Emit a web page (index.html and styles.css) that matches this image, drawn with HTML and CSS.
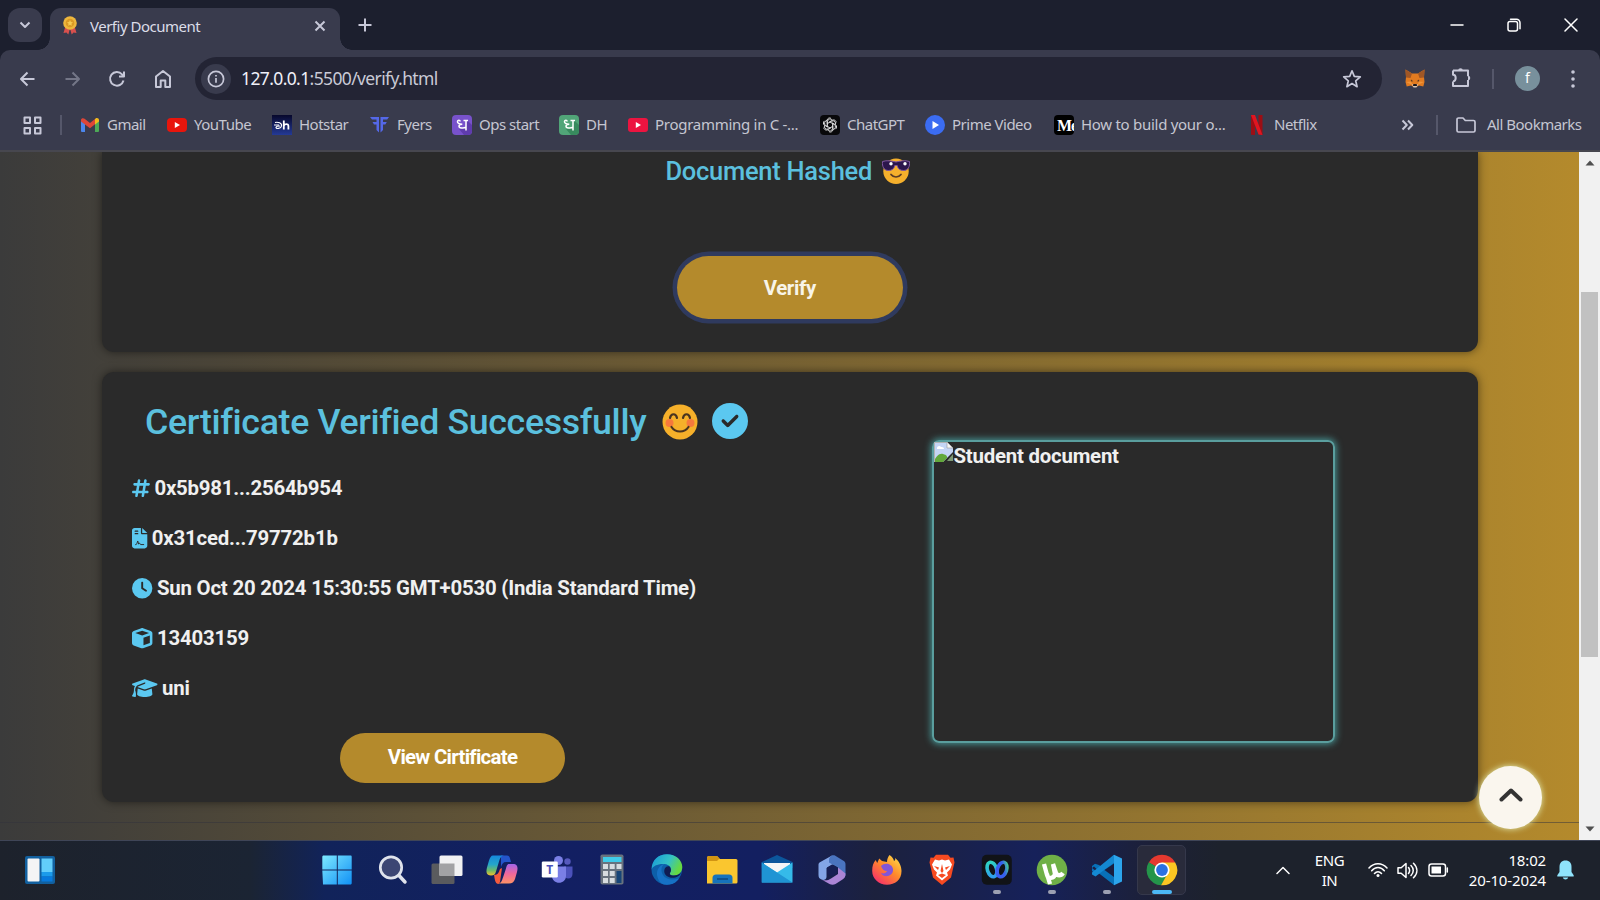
FILE: index.html
```html
<!DOCTYPE html>
<html lang="en">
<head>
<meta charset="utf-8">
<title>Verfiy Document</title>
<link rel="stylesheet" href="styles.css">
</head>
<body>
<div class="screen">
  <header class="tabstrip">
    <div class="tab-search"><svg width="12" height="8" viewBox="0 0 12 8" class="line w2"><path d="M1.500 1.500 6 6l4.500-4.500"/></svg></div>
    <div class="tab">
      <svg class="tab-fav" width="16" height="19" viewBox="0 0 16 19"><path d="M3.500 10 1.500 17l3-.5 1.800 2 1.700-6 1.700 6 1.800-2 3 .5-2-7z" fill="#d8504d"/><circle cx="8" cy="7" r="6.800" fill="#eeb73d"/><circle cx="8" cy="7" r="4.300" fill="#dc9a24"/><path d="m8 4 .9 2 2.100.2-1.600 1.500.5 2.100L8 8.700 6.100 9.800l.5-2.100L5 6.200 7.100 6z" fill="#f6cb52"/></svg>
      <span class="tab-title">Verfiy Document</span>
      <svg class="line w2" width="12" height="12" viewBox="0 0 12 12"><path d="m1.500 1.500 9 9m0-9-9 9"/></svg>
    </div>
    <svg class="new-tab line w2" width="14" height="14" viewBox="0 0 14 14"><path d="M7 .5v13M.5 7h13"/></svg>
    <div class="window-buttons">
      <svg width="14" height="14" viewBox="0 0 14 14" class="white"><path d="M1 7h12"/></svg>
      <svg width="14" height="14" viewBox="0 0 14 14" class="white"><rect x="1" y="3.500" width="9.500" height="9.500" rx="2"/><path d="M3.500 1.200h6a3.500 3.500 0 0 1 3.500 3.500v6"/></svg>
      <svg width="14" height="14" viewBox="0 0 14 14" class="white"><path d="m1 1 12 12M13 1 1 13"/></svg>
    </div>
  </header>

  <div class="chrome">
    <div class="toolbar">
      <div class="nav">
        <svg class="line w2" width="17" height="16" viewBox="0 0 17 16"><path d="M15.500 8H2M8.500 1.500 2 8l6.500 6.500"/></svg>
        <svg class="line w2 dim" width="17" height="16" viewBox="0 0 17 16"><path d="M1.500 8H15M8.500 1.500 15 8l-6.500 6.500"/></svg>
        <svg class="line w2" width="18" height="18" viewBox="0 0 18 18"><path d="M15.500 10.500A6.800 6.800 0 1 1 14 4.300L16 6.500M16 1.500v5h-5"/></svg>
        <svg class="line w2" width="18" height="20" viewBox="0 0 18 20"><path d="M2 7.500 9 2l7 5.500V18h-4.700v-6.500H6.700V18H2z"/></svg>
      </div>
      <div class="omnibox">
        <span class="site-info"><svg class="line w17" width="18" height="18" viewBox="0 0 18 18"><circle cx="9" cy="9" r="7.600"/><path d="M9 8v4.800M9 5v1.600"/></svg></span>
        <span class="url"><b>127.0.0.1</b>:5500/verify.html</span>
        <svg class="star line w17" width="20" height="20" viewBox="0 0 20 20"><path d="m10 1.800 2.300 5.600 6 .5-4.600 3.900 1.400 5.900L10 14.600l-5.100 3.100 1.400-5.900L1.700 7.900l6-.5z"/></svg>
      </div>
      <svg class="fox" width="20" height="19" viewBox="0 0 20 19"><path d="m.5.500 6.500 4h6l6.500-4L19 8l.5 5-1.200 4.500-4.300-1L11.500 18h-3L6 16.500l-4.300 1L.5 13 1 8z" fill="#e27b20"/><path d="m.5.500 6.500 4L5.500 9 1 8.500zM19.500.5 13 4.500 14.500 9l4.500-.5z" fill="#a15725"/><path d="m6 10.500 2.300 1.700-2.500.3zM14 10.500l-2.300 1.700 2.500.3z" fill="#5a3a25"/><path d="m1 13 5-.5L7.500 16zM19 13l-5-.5-1.500 3.500z" fill="#f0953a"/><path d="m7 15.500 1.500-.5h3l1.500.5-1.500 3h-3z" fill="#d9c8b9"/><path d="M8.300 15h3.400l.3 2H8z" fill="#1d1818"/></svg>
      <svg class="puzzle line w2" width="21" height="21" viewBox="0 0 21 21"><path d="M2 3.500h5.500M11.500 3.500H17V9.300M17 13v6H2v-4.500M2 3.500v4.200c3.600 0 3.600 6.800 0 6.800M7.500 3.500h4"/><path d="M7.200 3.500a2.300 2.300 0 0 1 4.600 0zM17 8.800a2.300 2.300 0 0 1 0 4.600z" fill="#c7c8d8" stroke="none"/></svg>
      <i class="divider"></i>
      <span class="avatar">f</span>
      <svg class="menu" width="4" height="18" viewBox="0 0 4 18"><circle cx="2" cy="2" r="1.800"/><circle cx="2" cy="9" r="1.800"/><circle cx="2" cy="16" r="1.800"/></svg>
    </div>

    <nav class="bookmarks">
      <svg class="apps line w2" width="19" height="19" viewBox="0 0 19 19"><path d="M1.500 1.500H7V7H1.500zM12 1.500h5.500V7H12zM1.500 12H7v5.500H1.500zM12 12h5.500v5.500H12z"/></svg>
      <i class="divider"></i>
      <span class="bm"><svg viewBox="0 0 20 20"><path d="M1 4.500 5 7v10H2a1 1 0 0 1-1-1z" fill="#4b86ec"/><path d="M15 7l4-2.500V16a1 1 0 0 1-1 1h-3z" fill="#4daa57"/><path d="M1 5.200C1 3 3.400 2.800 4.600 3.700L10 8l5-4v5.300L10 13.200 1 6.500z" fill="#dd4638"/><path d="m15 4 .6-.5C17 2.600 19 3.200 19 5.300v1.200l-4 3z" fill="#f3ba1d"/></svg><span>Gmail</span></span>
      <span class="bm"><svg viewBox="0 0 20 20"><rect y="3" width="20" height="14" rx="4" fill="#e8150c"/><path d="m7.800 7 5.200 3-5.200 3z" fill="#fff"/></svg><span>YouTube</span></span>
      <span class="bm"><svg viewBox="0 0 20 20"><defs><linearGradient id="hot" x2="0" y2="1"><stop stop-color="#07082c"/><stop offset="1" stop-color="#243a96"/></linearGradient></defs><path d="M0 0h20v20H0z" fill="url(#hot)"/><path d="M3 7.500c3-.8 7 .5 6.500 3.500S4 14 4 12.500s3-1.500 4-1.500M2 10h5" fill="none" stroke="#fff" stroke-width="1.200"/><path d="M11.800 5.500v9M11.800 11c.5-2.500 4.600-2.700 4.600 0v3.500" fill="none" stroke="#fff" stroke-width="1.800"/></svg><span>Hotstar</span></span>
      <span class="bm"><svg viewBox="0 0 20 20"><path d="M0 2h9v15.500L6.500 15V9.500H4L2.500 7H6.500V4.500H2zM10.500 2H19l-1.800 2.500H13V7h3.800l-1.500 2.500H13V15l-2.500 2.500z" fill="#5468e8"/></svg><span>Fyers</span></span>
      <span class="bm"><svg viewBox="0 0 20 20"><rect width="20" height="20" rx="4" fill="#7852cb"/><path d="m15 5 5 5v6a4 4 0 0 1-4 4h-4l-5-6 7-1z" fill="#5f3cad"/><path d="M11.500 5.500H16M14 5.500v10M14 12.200c-2 1.200-7 1.300-7-1 0-1.500 1.800-1.900 3.300-1.900C7 9.300 5.200 8 5.500 6.400c.3-1.500 2.600-1.400 2.600.1" fill="none" stroke="#fff" stroke-width="1.500"/></svg><span>Ops start</span></span>
      <span class="bm"><svg viewBox="0 0 20 20"><rect width="20" height="20" rx="4" fill="#51a578"/><path d="m15 5 5 5v6a4 4 0 0 1-4 4h-4l-5-6 7-1z" fill="#388a5e"/><path d="M11.500 5.500H16M14 5.500v10M14 12.200c-2 1.200-7 1.300-7-1 0-1.500 1.800-1.900 3.300-1.900C7 9.300 5.200 8 5.500 6.400c.3-1.500 2.600-1.400 2.600.1" fill="none" stroke="#fff" stroke-width="1.500"/></svg><span>DH</span></span>
      <span class="bm roomy"><svg viewBox="0 0 20 20"><rect y="3" width="20" height="14" rx="3" fill="#ec1440"/><path d="m7.800 7 5.200 3-5.200 3z" fill="#fff"/></svg><span>Programming in C -...</span></span>
      <span class="bm"><svg viewBox="0 0 20 20"><rect width="20" height="20" rx="4" fill="#08080a"/><g fill="none" stroke="#e6e6e6" stroke-width=".95" transform="translate(1 1) scale(.9)"><path id="pt" d="M7.200 11.500V6.300a3 3 0 0 1 5.500-1.600M8.700 7l4.300-2.500a3 3 0 0 1 4 2.600"/><use href="#pt" transform="rotate(60 10 10)"/><use href="#pt" transform="rotate(120 10 10)"/><use href="#pt" transform="rotate(180 10 10)"/><use href="#pt" transform="rotate(240 10 10)"/><use href="#pt" transform="rotate(300 10 10)"/></g></svg><span>ChatGPT</span></span>
      <span class="bm"><svg viewBox="0 0 20 20"><circle cx="10" cy="10" r="10" fill="#3b6cf2"/><path d="m7.500 6 6.500 4-6.500 4z" fill="#fff"/></svg><span>Prime Video</span></span>
      <span class="bm roomy"><svg viewBox="0 0 20 20"><rect width="20" height="20" rx="4" fill="#000"/><text x="3" y="15.500" class="medium-logo">Me</text></svg><span>How to build your o...</span></span>
      <span class="bm netflix"><svg viewBox="0 0 20 20"><path d="M1 0h4v20l-4-.3zM8.500 0h4v20l-4-.5z" fill="#9c0e14"/><path d="M1 0h4l7.500 20-4-.5z" fill="#e01520"/></svg><span>Netflix</span></span>
      <svg class="more line w2" width="13" height="12" viewBox="0 0 13 12"><path d="m1.500 1.500 4.300 4.500-4.300 4.500M7 1.500 11.300 6 7 10.500"/></svg>
      <i class="divider"></i>
      <span class="bm all"><svg class="line w17" viewBox="0 0 20 20"><path d="M1 15.500V4.500A1.500 1.500 0 0 1 2.500 3H7l2.300 2.500h8.200A1.500 1.500 0 0 1 19 7v8.500a1.500 1.500 0 0 1-1.500 1.500h-15A1.500 1.500 0 0 1 1 15.500z"/></svg><span>All Bookmarks</span></span>
    </nav>
  </div>

  <div class="viewport">
    <main class="page">
      <section class="card upload">
        <h3 class="hashed"><span>Document Hashed</span>
          <svg width="28" height="28" viewBox="0 0 28 28"><circle cx="14" cy="14.300" r="12.700" fill="#f5b02c"/><path d="M.5 4.500C5 3 10 4 14 5c4-1 9-2 13.500-.5.6 5-1.500 9-6 9-3.500 0-5.500-1.500-6.300-5h-2.400c-.8 3.500-2.800 5-6.300 5-4.500 0-6.600-4-6-9z" fill="#2c164c" stroke="#8056a0"/><circle cx="9" cy="6.800" r="1.700" fill="#fff"/><circle cx="23" cy="6.800" r="1.700" fill="#fff"/><path d="M9 17.500c2.500 3.300 7.500 3.300 10 0" fill="none" stroke="#593b25" stroke-width="1.700" stroke-linecap="round"/></svg>
        </h3>
        <button class="btn verify">Verify</button>
      </section>

      <section class="card result">
        <div class="details">
          <h2 class="verified"><span>Certificate Verified Successfully</span>
            <svg class="smile" width="36" height="36" viewBox="0 0 36 36"><circle cx="18" cy="18" r="17.500" fill="#f6b02a"/><circle cx="7.500" cy="19" r="4" fill="#f6793c"/><circle cx="28.500" cy="19" r="4" fill="#f6793c"/><path d="M8 14c1-5 6-5 7 0M21 14c1-5 6-5 7 0M9.500 23c4 6 13 6 17 0" fill="none" stroke="#4a3420" stroke-width="2.200" stroke-linecap="round"/></svg>
            <svg class="fa" width="36" height="36" viewBox="0 0 512 512"><path d="M256 512A256 256 0 1 0 256 0a256 256 0 1 0 0 512zM369 209L241 337c-9.400 9.400-24.600 9.400-33.900 0l-64-64c-9.400-9.400-9.400-24.600 0-33.900s24.600-9.400 33.900 0l47 47L335 175c9.400-9.400 24.600-9.400 33.900 0s9.400 24.600 0 33.900z"/></svg>
          </h2>
          <ul class="facts">
            <li><svg class="fa" width="17.900" height="20.400" viewBox="0 0 448 512"><path d="M181.300 32.400c17.400 2.900 29.200 19.400 26.300 36.800L197.800 128h95.100l11.500-69.300c2.900-17.400 19.400-29.200 36.800-26.300s29.200 19.400 26.300 36.800L357.800 128H416c17.700 0 32 14.300 32 32s-14.300 32-32 32H347.100L325.800 320H384c17.700 0 32 14.300 32 32s-14.300 32-32 32H315.100l-11.500 69.300c-2.900 17.400-19.400 29.200-36.800 26.300s-29.200-19.400-26.300-36.800l9.800-58.700H155.100l-11.500 69.300c-2.900 17.400-19.400 29.200-36.800 26.300s-29.200-19.400-26.300-36.800L90.200 384H32c-17.700 0-32-14.300-32-32s14.300-32 32-32h68.900l21.300-128H64c-17.700 0-32-14.300-32-32s14.300-32 32-32h68.900l11.500-69.300c2.900-17.400 19.400-29.200 36.800-26.300zM187.100 192L165.800 320h95.100l21.300-128H187.100z"/></svg><span>0x5b981...2564b954</span></li>
            <li><svg class="fa" width="15.300" height="20.400" viewBox="0 0 384 512"><path fill-rule="evenodd" d="M64 0C29 0 0 29 0 64v384c0 35 29 64 64 64h256c35 0 64-29 64-64V160H256c-18 0-32-14-32-32V0zM256 0v128h128zM80 64h64c9 0 16 7 16 16s-7 16-16 16H80c-9 0-16-7-16-16s7-16 16-16zm0 64h64c9 0 16 7 16 16s-7 16-16 16H80c-9 0-16-7-16-16s7-16 16-16z"/><path d="M80 416h16c12 0 20-8 24-20l24-70 24 80c12-30 30-30 40-6l8 16h88" class="sign"/></svg><span>0x31ced...79772b1b</span></li>
            <li><svg class="fa" width="20.400" height="20.400" viewBox="0 0 512 512"><path d="M256 0a256 256 0 1 1 0 512A256 256 0 1 1 256 0zM232 120V256c0 8 4 15.500 10.700 20l96 64c11 7.400 25.900 4.400 33.300-6.700s4.400-25.900-6.700-33.300L280 243.200V120c0-13.300-10.700-24-24-24s-24 10.700-24 24z"/></svg><span class="date-line">Sun Oct 20 2024 15:30:55 GMT+0530 (India Standard Time)</span></li>
            <li><svg class="fa" width="20.400" height="20.400" viewBox="0 0 512 512"><path d="M234.500 5.700c13.900-5 29.100-5 43.100 0l192 68.600C495 83.400 512 107.500 512 134.600V377.400c0 27-17 51.200-42.500 60.300l-192 68.600c-13.900 5-29.100 5-43.100 0l-192-68.600C17 428.600 0 404.500 0 377.400V134.600c0-27 17-51.200 42.500-60.300l192-68.600zM256 66L82.300 128 256 190l173.700-62L256 66zm32 368.600l160-57.100v-188L288 246.600v188z"/></svg><span>13403159</span></li>
            <li><svg class="fa" width="25.500" height="20.400" viewBox="0 0 640 512"><path d="M320 32c-8.100 0-16.100 1.400-23.700 4.100L15.800 137.400C6.300 140.900 0 149.900 0 160s6.300 19.100 15.800 22.600l57.900 20.900C57.300 229.300 48 259.800 48 291.900v28.100c0 28.400-10.800 57.700-22.300 80.800c-6.500 13-13.900 25.800-22.500 37.600C0 442.700-.9 448.300 .9 453.400s6 8.900 11.200 10.200l64 16c4.200 1.100 8.700 .3 12.400-2s6.300-6.100 7.100-10.400c8.600-42.800 4.300-81.200-2.100-108.700C90.300 344.300 86 329.800 80 316.500V291.900c0-30.200 10.200-58.700 27.900-81.500c12.900-15.500 29.600-28 49.200-35.700l157-61.700c8.200-3.200 17.500 .8 20.700 9s-.8 17.500-9 20.700l-157 61.700c-12.400 4.900-23.300 12.400-32.200 21.600l159.600 57.600c7.600 2.700 15.600 4.100 23.700 4.100s16.100-1.400 23.700-4.100L624.200 182.600c9.500-3.400 15.800-12.500 15.800-22.600s-6.300-19.100-15.800-22.600L343.700 36.100C336.100 33.400 328.100 32 320 32zM128 408c0 35.300 86 72 192 72s192-36.700 192-72L496.700 262.600 354.500 314c-11.100 4-22.800 6-34.500 6s-23.500-2-34.500-6L143.300 262.600 128 408z"/></svg><span>uni</span></li>
          </ul>
          <button class="btn view">View Cirtificate</button>
        </div>
        <div class="document">
          <svg width="20" height="20" viewBox="0 0 20 20"><path d="M1 0h12l6 6v4L9 20H0V1z" fill="#c5d5f5"/><path d="M3 6c0-2 3-3 4-1 2-.3 3 .7 3 2H3z" fill="#fff"/><path d="M0 19c2-4 5-8 9-7s4 2 4 4l-4 4H0z" fill="#62a83b"/><path d="M13 0v6h6z" fill="#f5f5f5" stroke="#999" stroke-width=".6"/><path d="M19 12v7h-6z" fill="#7c9874"/><path d="M.5 20V.5H13" fill="none" stroke="#b3b3b3"/></svg><span>Student document</span>
        </div>
      </section>
      <hr class="rule">
      <div class="to-top"><svg width="24" height="14" viewBox="0 0 24 14"><path d="m2.500 11.500 9.500-9 9.500 9" fill="none" stroke="#333" stroke-width="4" stroke-linecap="round" stroke-linejoin="round"/></svg></div>
    </main>
    <div class="scrollbar">
      <svg width="10" height="6" viewBox="0 0 10 6"><path d="M5 .5 9.500 5.500H.5z"/></svg>
      <i class="thumb"></i>
      <svg width="10" height="6" viewBox="0 0 10 6"><path d="M5 5.500.5.500h9z"/></svg>
    </div>
  </div>

  <footer class="taskbar">
    <div class="widgets"><svg width="30" height="28" viewBox="0 0 30 28"><rect width="30" height="28" rx="2" fill="#12609f"/><rect x="2.500" y="2.500" width="12" height="23" rx="1" fill="#f4f4f5"/><path d="M16.500 2.500h11V16h-11z" fill="#62cdfa"/><path d="M16.500 16h11v4.500h-11z" fill="#1b9bea"/><path d="M16.500 20.500h11v5h-11z" fill="#0779dc"/></svg></div>
    <div class="pinned">
      <div class="app"><svg viewBox="0 0 32 32"><defs><linearGradient id="win" gradientUnits="userSpaceOnUse" x1="1" y1="1" x2="31" y2="31"><stop stop-color="#7feaff"/><stop offset="1" stop-color="#0f8ff5"/></linearGradient></defs><path d="M2 1.500h13.800v14H1.300V2.500zM16.800 1.500h13.400l.5 1v13H16.800zM1.300 16.500h14.500v14H2zM16.800 16.500h13.900v13l-.7 1H16.800z" fill="url(#win)"/></svg></div>
      <div class="app search"><svg viewBox="0 0 32 32"><circle cx="14" cy="13.500" r="10.700" fill="#3c4673" stroke="#dfe3ec" stroke-width="2.700"/><path d="m22 21.500 6 6.500" stroke="#dfe3ec" stroke-width="3.500" stroke-linecap="round"/></svg></div>
      <div class="app"><svg viewBox="0 0 32 32"><rect x=".5" y="9.500" width="23" height="20.500" rx="1.500" fill="#5a5b5e"/><rect x="8.500" y="1.500" width="23" height="20.500" rx="1.500" fill="#f1f1f2"/><path d="M8.500 9.500h15V22h-15z" fill="#a2a2a4"/></svg></div>
      <div class="app"><svg viewBox="0 0 32 32"><defs><linearGradient id="ca" x2="0" y2="1"><stop stop-color="#1688dc"/><stop offset=".45" stop-color="#25a6ca"/><stop offset=".75" stop-color="#70bb66"/><stop offset="1" stop-color="#f3c02c"/></linearGradient><linearGradient id="cb" x2="0" y2="1"><stop stop-color="#a265e8"/><stop offset=".5" stop-color="#f0679b"/><stop offset="1" stop-color="#fd9265"/></linearGradient></defs><path d="M15 1.500h6c3 0 3 3 4 6.500h-5c-3 0-4 2-5 5z" fill="#2455cb"/><path d="M7 1.500h11c-3 0-4 3-5 6l-3 10c-1 3-2 4-5 4-5 0-5-4-4-8l2-7c1-3 2-5 4-5z" fill="url(#ca)"/><path d="M8 21c4 0 5-3 6-6l2-1-2 14c-1 2-2 2-2 2-3-1-3-4-4-9z" fill="#f55a3d"/><path d="M23 10h4c5 0 5 4 4 8l-2 7c-1 3-3 4.500-6 4.500H12c3 0 4-3 5-6l3-9c.5-2 1-4.500 3-4.500z" fill="url(#cb)"/></svg></div>
      <div class="app"><svg viewBox="0 0 32 32"><circle cx="17.500" cy="6.500" r="4.500" fill="#7a7fe5"/><circle cx="26.500" cy="7.500" r="3.200" fill="#5659bd"/><path d="M23 12.500h8.500V20c0 6-8.500 6-8.500 0z" fill="#4b51ba"/><path d="M11 12.500h14V22c0 9-14 9-14 0z" fill="#7a7fe5"/><rect x=".8" y="7.500" width="16" height="16" rx="1.300" fill="#fff"/><text x="8.800" y="20" class="teams-t">T</text></svg></div>
      <div class="app"><svg viewBox="0 0 32 32"><rect x="4.500" y=".5" width="23" height="30" rx="1.800" fill="#68727e"/><path d="M7 3h18.500v5H7z" fill="#40cbe9"/><path d="M7 10h5v5H7zm6.700 0h5v5h-5zm6.800 0h5v5h-5zM7 17h5v5H7zm6.700 0h5v5h-5zM7 24h5v5H7zm6.700 0h5v5h-5z" fill="#d7dce0"/><path d="M20.500 17h5v12h-5z" fill="#164477"/></svg></div>
      <div class="app"><svg viewBox="0 0 32 32"><defs><linearGradient id="ed" x2="1" y2=".4"><stop stop-color="#1698d8"/><stop offset=".6" stop-color="#35c1c5"/><stop offset="1" stop-color="#65d943"/></linearGradient></defs><circle cx="15.700" cy="15.500" r="15.200" fill="#0d5fa9"/><path d="M.6 15.500C1 5 8 .3 16 .3c9 0 15.300 6 15.300 12.700 0 5-3.500 8.500-8.300 8.500-4 0-5-1.500-3.500-3.500 2-4-1-7.500-6-8C7 9.500 1.500 12 .6 15.500z" fill="url(#ed)"/><path d="M13.500 10C10 12 9.500 17 12 21s8 6 16 3.500C25 29 21 30.700 16 30.700 9 30.700 7 26 6 21c-.5-6 3-10 7.500-11z" fill="#1671c5"/><path d="M19.500 18c-1.500 2-.5 3.500 3.500 3.500 3 0 6-1.500 7-3.500-1 7-14 8-16.500 1-1-4 1.500-7.500 5-6.500 1 1.500 2 3.500 1 5.500z" fill="#101c53"/></svg></div>
      <div class="app"><svg viewBox="0 0 32 32"><path d="M1 4a2 2 0 0 1 2-2h8l3 3h16a1.500 1.500 0 0 1 1.500 1.500V28a1.500 1.500 0 0 1-1.500 1.500H1z" fill="#fac62f"/><path d="M1 4a2 2 0 0 1 2-2h8l2.500 2.500L11 7H1z" fill="#d19413"/><path d="M6.500 29.500V24a3.500 3.500 0 0 1 3.500-3.500h13a3.500 3.500 0 0 1 3.500 3.500v5.500z" fill="#1673bb"/><path d="M11 25h11" stroke="#0d477f" stroke-width="1.500"/></svg></div>
      <div class="app"><svg viewBox="0 0 32 32"><path d="M.8 8 16 1l15.500 7v6H.8z" fill="#0c569c"/><path d="M3 9h26v14H3z" fill="#f4f5f6"/><path d="M.8 8.500 16 18.500l15.500-10v20H.8z" fill="#35bae9"/><path d="m.8 8.500 30.700 20H.8z" fill="#1f94d4"/></svg></div>
      <div class="app"><svg viewBox="0 0 32 32"><path d="M16 1.500 3.500 8.500C2.500 9.500 2.500 10 2.500 11v10c0 3 1 3.500 3 4.500s5 0 5-2.500V14l9-5V4z" fill="#83a5e6"/><path d="M16 1.500c2-.5 3 0 4.500 1l6.500 4c2 1 2.500 2 2.500 4v10c0 2-1 3-2.500 4l-5-3v-8l-9-5V6c0-2 1-3.500 3-4.500z" fill="#4a74bf"/><path d="M22 13.500V20l-7 4.500c-3 2-6 2.500-9.500 1l8 4.500c2 1 4 1 6 0l7-4.500c2.500-1.500 3-3 3-6z" fill="#ab85d6"/><path d="m16 10.500 5.500 3V19L16 22.500 11 19.500v-6z" fill="#171f54"/></svg></div>
      <div class="app"><svg viewBox="0 0 32 32"><defs><linearGradient id="ff" x1="1" x2=".2" y2="1"><stop stop-color="#ffe84b"/><stop offset=".5" stop-color="#ff8a2a"/><stop offset="1" stop-color="#f62d6c"/></linearGradient></defs><path d="M18.500 1c2.500 1.500 4 3.500 4.500 6 2-1 1-2 1-3 4 3 6.500 8 6.500 13 0 9-6.500 13.700-14.500 13.700S1.200 25 1.200 17c0-5 1-8 3.500-11l1.500 3 2-4.500L11 7l5 1c0-3 1-5 2.500-7z" fill="url(#ff)"/><path d="M10 12c4-4 11-2 12 3 1 7-9 10-12 4 3 1 5 0 6-2-3 0-5-2-6-5z" fill="#8255d7"/></svg></div>
      <div class="app"><svg viewBox="0 0 32 32"><path d="m10 .8 12 0 2.500 3 3-.3 1 5-1 4-2.500 11L16 31 7 23.500 4.500 12.500l-1-4 1-5 3 .3z" fill="#f64a21"/><path d="m9 5.500 4 1 3-1 3 1 4-1 3 5-2 5-3 3 1 3-6 5-6-5 1-3-3-3-2-5z" fill="#fff"/><path d="m8 12 5 1.500L12 16zm16 0-5 1.500L20 16zM16 10l1.500 7-1.500 2-1.500-2zm-4 11 4-1.500 4 1.500-4 3z" fill="#f64a21"/></svg></div>
      <div class="app open"><svg viewBox="0 0 32 32"><defs><linearGradient id="wl" x2="0" y2="1"><stop stop-color="#2fd3c4"/><stop offset="1" stop-color="#2f9cf0"/></linearGradient><linearGradient id="wr" x1="1" x2="0" y2="1"><stop stop-color="#49dc86"/><stop offset=".4" stop-color="#3560ee"/><stop offset="1" stop-color="#3d5cf0"/></linearGradient></defs><rect x=".8" y=".8" width="30" height="30" rx="5" fill="#111317"/><ellipse cx="11" cy="15.500" rx="4.600" ry="7.500" transform="rotate(-18 11 15.500)" fill="none" stroke="url(#wl)" stroke-width="3.600"/><ellipse cx="21" cy="15.500" rx="4.600" ry="7.500" transform="rotate(18 21 15.500)" fill="none" stroke="url(#wr)" stroke-width="3.600"/></svg></div>
      <div class="app open"><svg viewBox="0 0 32 32"><circle cx="16" cy="16" r="15.300" fill="#6fb047"/><path d="m8 10 3 11c1 4 7 4 8-1l-2-10 3 9c1 3 5 3 7 0M11 20l3 10" fill="none" stroke="#fff" stroke-width="4.300"/></svg></div>
      <div class="app open"><svg viewBox="0 0 32 32"><path d="m23 .8 8 3.700v23l-8 3.700z" fill="#2ca5ec"/><path d="m23 .8-20 18-2-1.800v-3L3 12.500l20 18.700V22L8 11 4 9.800 1 12v2l22 17V.8z" fill="#0871b8"/><path d="M23 .8v8L4.500 22.500 1 20.500v-2z" fill="#1489d2"/><path d="m23 9.500-9.500 6.500 9.500 7z" fill="#191f40"/></svg></div>
      <div class="app active"><svg viewBox="0 0 32 32"><path d="M2.800 8.500A15.200 15.200 0 0 1 29.200 8.500L16 16z" fill="#e5392f"/><path d="M2.800 8.300A15.200 15.200 0 0 0 15 31.300l7-11.500-6-3.800z" fill="#24954a"/><path d="M29.200 8.500A15.200 15.200 0 0 1 15 31.300l8-14.300-7-8.500z" fill="#fbc622"/><circle cx="16" cy="16" r="7.600" fill="#fff"/><circle cx="16" cy="16" r="5.900" fill="#2b71e2"/></svg></div>
    </div>
    <div class="tray">
      <svg class="white" width="14" height="9" viewBox="0 0 14 9"><path d="m1 7.500 6-6 6 6"/></svg>
      <span class="lang">ENG<br>IN</span>
      <svg class="wifi white" width="20" height="16" viewBox="0 0 20 16"><path d="M1 6C6 .2 14 .2 19 6M3.700 8.800c3.500-4.300 9.100-4.300 12.600 0M6.500 11.500c2-2.500 5-2.500 7 0"/><circle cx="10" cy="13.500" r="1.500" fill="#fff" stroke="none"/></svg>
      <svg class="sound white" width="21" height="17" viewBox="0 0 21 17"><path d="M1 5.700h3.200L9 1.500v14l-4.800-4.200H1zM11.500 5.500c1.500 2 1.500 4 0 6M14 3.500c3 3 3 7 0 10M16.500 1.200c4.500 4.500 4.500 10 0 14.600"/></svg>
      <svg class="battery white" width="21" height="14" viewBox="0 0 21 14"><rect x="1" y="1" width="16.500" height="12" rx="2.500"/><path d="M3.500 3.500h9.500v7H3.500z" fill="#fff" stroke="none"/><path d="M19.300 5v4"/></svg>
      <span class="clock">18:02<br><span>20-10-2024</span></span>
      <svg class="bell" width="17" height="20" viewBox="0 0 17 20"><path d="M8.500.5c4 0 6 2.500 6 6.500v5l2.200 3.200v1.300H.3v-1.300L2.500 12V7c0-4 2-6.500 6-6.500zM5.800 17.500h5.400c-.7 2.500-4.700 2.500-5.400 0z" fill="#8fe3fb"/></svg>
    </div>
  </footer>
</div>
</body>
</html>
```
FILE: styles.css
```css
* { box-sizing: border-box; }
body { margin: 0; }
.screen {
  width: 1600px; height: 900px; overflow: hidden;
  display: grid; grid-template-rows: 50px 102px 688px 60px;
  background: #1c1f2e;
  font-family: "Noto Sans", "Open Sans", sans-serif;
}
svg { display: block; flex: none; }
.line { fill: none; stroke: #c7c8d8; stroke-linejoin: round; }
.w2 { stroke-width: 2; }
.w17 { stroke-width: 1.7; }
.dim { stroke: #747687; }
.white { fill: none; stroke: #fff; stroke-width: 1.5; stroke-linejoin: round; stroke-linecap: round; }

/* Tab strip */
.tabstrip { display: flex; align-items: flex-start; padding: 8px 13px 0 8px; }
.tab-search { width: 34px; height: 34px; border-radius: 12px; background: #393b4d; display: grid; place-items: center; }
.tab {
  width: 290px; height: 42px; margin-left: 8px; padding: 0 14px 7px 12px;
  background: #393b4d; border-radius: 11px 11px 0 0;
  display: flex; align-items: center; position: relative;
}
.tab::before, .tab::after { content: ""; position: absolute; bottom: 0; width: 12px; height: 12px; }
.tab::before { left: -12px; background: radial-gradient(circle at 0 0, transparent 11.5px, #393b4d 12px); }
.tab::after { right: -12px; background: radial-gradient(circle at 100% 0, transparent 11.5px, #393b4d 12px); }
.tab-title { flex: 1; margin: 1px 0 0 12px; font-size: 15px; line-height: 20px; letter-spacing: -.5px; color: #dcdde8; }
.new-tab { margin: 10px 0 0 18px; }
.window-buttons { display: flex; gap: 43px; margin: 10px 9px 0 auto; }

/* Toolbar */
.chrome { background: #393b4d; border-bottom: 2px solid #47474f; border-radius: 10px 10px 0 0; }
.toolbar { display: flex; align-items: center; height: 57px; padding: 0 25px 0 19px; }
.nav { display: flex; align-items: center; gap: 27.5px; width: 176px; }
.omnibox { width: 1187px; height: 43px; border-radius: 22px; background: #232434; display: flex; align-items: center; padding: 0 20px 0 6px; }
.site-info { width: 30px; height: 30px; border-radius: 50%; background: #393b4d; display: grid; place-items: center; }
.url { flex: 1; margin: -1px 0 0 10px; font-size: 17.500px; letter-spacing: -.62px; color: #c9cad6; }
.url b { font-weight: 400; color: #f0f0f8; }
.fox { margin-left: 23px; }
.puzzle { margin: -3px 0 0 26px; }
.divider { width: 2px; height: 20px; background: #55576a; }
.toolbar .divider { margin-left: 20px; }
.avatar { width: 25px; height: 25px; border-radius: 50%; background: #78909c; color: #fff; font-size: 14px; line-height: 24px; text-align: center; margin-left: 21px; }
.menu { fill: #c7c8d8; margin-left: auto; }

/* Bookmarks */
.bookmarks {
  display: grid; align-items: center; height: 36px; padding-left: 23px;
  grid-template-columns: 37px 20px 87px 105px 98px 82px 107px 69px 192px 105px 129px 196px 151px 35px 20px 1fr;
  color: #c5c6d1; font-size: 15px; white-space: nowrap;
}
.bm { display: flex; align-items: center; gap: 7px; letter-spacing: -.5px; }
.bm span { margin-top: -2px; }
.bm svg { width: 20px; height: 20px; }
.bm.roomy { letter-spacing: -.28px; }
.bm.netflix { gap: 4px; }
.bm.all { gap: 11px; }
.medium-logo { font: 700 16px "Liberation Serif", serif; fill: #fff; letter-spacing: -1px; }

/* Page */
.viewport { display: grid; grid-template-columns: 1579px 21px; overflow: hidden; }
.page {
  position: relative; overflow: hidden; padding: 0 101.5px 0 102px;
  background: linear-gradient(90deg, #3b3b3b, #b48a2c);
  font-family: Roboto, sans-serif; color: #f0f0f0;
}
.card { background: #2a2a2a; box-shadow: 0 0 10px rgba(0, 0, 0, .5); border-radius: 12px; }
.upload { height: 200px; border-radius: 0 0 12px 12px; display: flex; flex-direction: column; align-items: center; }
.hashed { display: flex; gap: 10px; margin: 3px 4px 0 0; height: 31px; align-items: center; color: #5bc0de; font-size: 25.500px; font-weight: 500; letter-spacing: -.27px; }
.btn { border: 0; padding: 0; background: #b48a2c; color: #fff; font: 700 20.400px Roboto, sans-serif; border-radius: 32px; }
.verify { width: 226px; height: 63px; margin-top: 70px; color: #f8f4e8; letter-spacing: -.35px; box-shadow: 0 0 0 4.500px #2f3a5e; }
.result { margin-top: 20px; height: 430px; display: grid; grid-template-columns: 829.500px 403px; }
.details { padding: 30px 0 0 30px; }
.verified { margin: 0 0 0 13px; height: 40px; display: flex; align-items: center; color: #5bc0de; font-size: 35.700px; font-weight: 500; letter-spacing: -.32px; }
.smile { margin: -1px 14px 0 16px; }
.verified .fa { margin-top: -2px; }
.fa { fill: #5bc8f0; overflow: visible; }
.sign { fill: none; stroke: #2a2a2a; stroke-width: 24; }
.facts { list-style: none; margin: 21px 0 0; padding: 0; font-size: 20.400px; font-weight: 700; letter-spacing: -.2px; }
.facts li { height: 50px; display: flex; align-items: center; gap: 4.500px; }
.view { display: block; width: 225px; height: 50px; margin: 20px 0 0 208px; padding-bottom: 2px; letter-spacing: -.72px; }
.document {
  height: 303px; margin-top: 68px; border: 2px solid #5a9e9e; border-radius: 7px;
  box-shadow: 0 0 7px 1px rgba(80, 190, 190, .75);
  display: flex; font-size: 20.400px; line-height: 28px; font-weight: 700; letter-spacing: -.22px;
}
.rule { border: 0; height: 1px; margin: 20px -102px 0; background: rgba(50, 50, 60, .5); }
.to-top {
  position: absolute; left: 1479px; top: 614px; width: 63px; height: 63px; border-radius: 50%;
  background: #faf6ee; box-shadow: 0 0 6px #e5f0b8; display: grid; place-items: center; padding-bottom: 6px;
}
.scrollbar { background: #f1f1f1; display: flex; flex-direction: column; align-items: center; padding: 8px 0; fill: #505050; }
.thumb { width: 17px; height: 365px; margin: 126px 0 auto; background: #c1c1c1; }

/* Taskbar */
.taskbar {
  display: flex; align-items: center; border-top: 1px solid #3f4557; color: #fff;
  background: linear-gradient(90deg, #1d222c 0, #1b2433 250px, #11235a 325px, #121f62 560px, #131f60 760px, #1c213d 875px, #16215a 1035px, #1c2038 1150px, #1d222c 1220px);
}
.widgets { width: 308.500px; padding: 0 0 2px 25px; }
.pinned { display: flex; }
.app { width: 55px; height: 59px; display: grid; justify-items: center; align-content: start; padding: 13px 0 0 1px; }
.app svg { width: 32px; height: 32px; }
.search svg { margin-left: 2px; }
.app.open::after, .app.active::after { content: ""; width: 8px; height: 4px; margin-top: 4px; border-radius: 2px; background: #9ca0b2; }
.app.active { width: 49px; height: 50px; margin: 4px 2.500px 0 3.500px; padding: 8px 0 0; border-radius: 5px; border: 1px solid #35384b; background: #292b3b; }
.app.active::after { width: 20px; background: #4cb8f5; }
.teams-t { font: 700 12px "Open Sans", sans-serif; fill: #4b51ba; text-anchor: middle; }
.tray { flex: 1; display: flex; align-items: center; padding: 0 0 1px 87px; font-size: 15px; line-height: 20px; }
.lang { width: 32px; margin-left: 24px; text-align: center; letter-spacing: -.4px; }
.wifi { margin-left: 22.500px; }
.sound { margin-left: 9px; }
.battery { margin-left: 10px; }
.clock { width: 90px; margin-left: 7px; text-align: right; letter-spacing: -.15px; }
.clock span { letter-spacing: -.1px; }
.bell { margin-left: 11px; }
```
